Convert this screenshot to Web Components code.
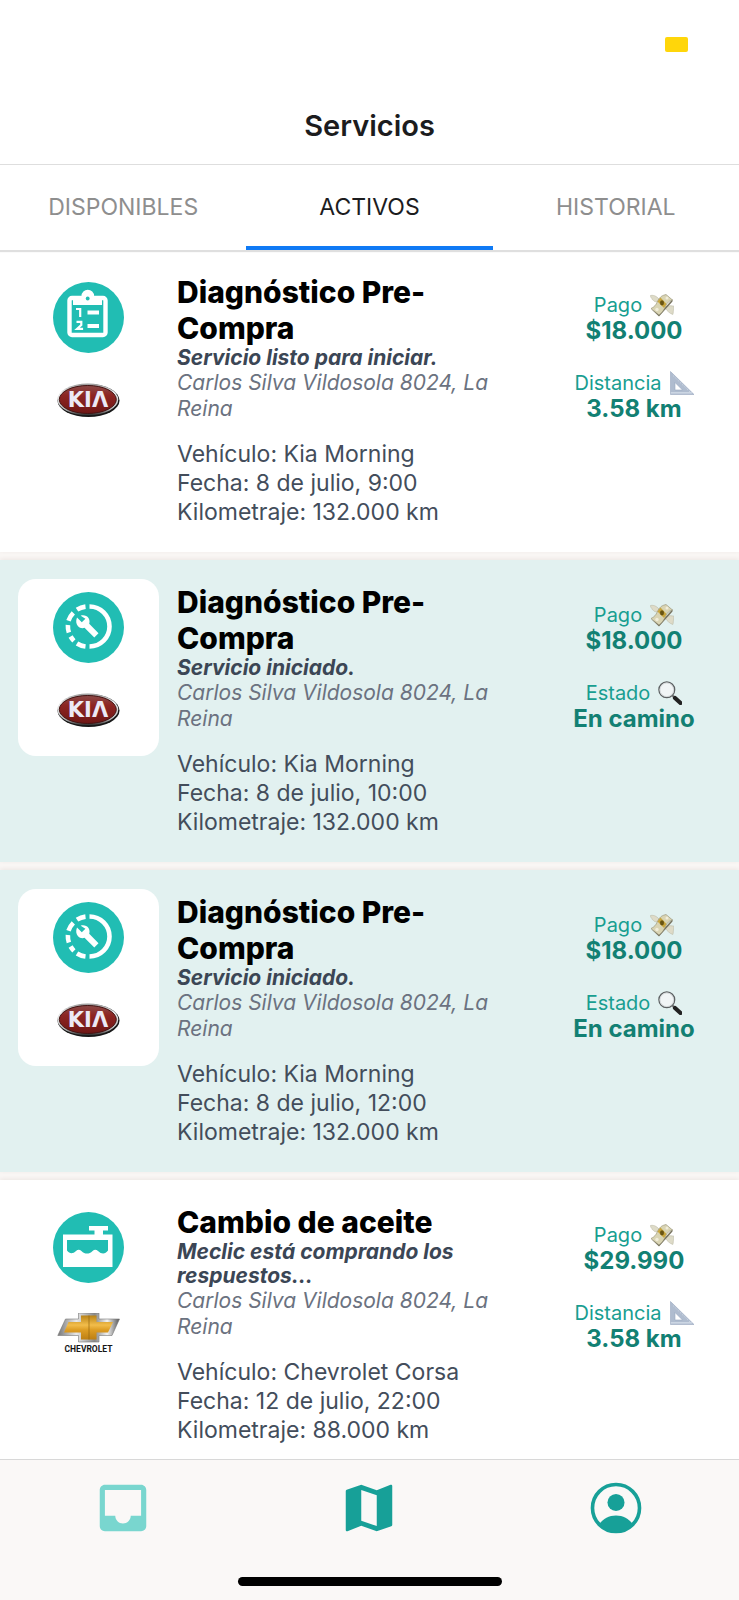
<!DOCTYPE html>
<html lang="es">
<head>
<meta charset="utf-8">
<meta name="viewport" content="width=device-width, initial-scale=1">
<title>Servicios</title>
<style>
  html, body { height: 100%; margin: 0; }
  body { background: #fff; font-family: Inter, "Liberation Sans", sans-serif; color: #000; }
</style>
</head>
<body>
<services-app>
  <screen-header slot="header">Servicios</screen-header>
  <tab-strip slot="header"></tab-strip>

  <service-card icon="checklist" brand="kia" metric="ruler">
    <span slot="title">Diagnóstico Pre-Compra</span>
    <span slot="status">Servicio listo para iniciar.</span>
    <span slot="address">Carlos Silva Vildosola 8024, La Reina</span>
    <span slot="vehicle">Kia Morning</span>
    <span slot="date">8 de julio, 9:00</span>
    <span slot="mileage">132.000 km</span>
    <span slot="price">$18.000</span>
    <span slot="metric-label">Distancia</span>
    <span slot="metric">3.58 km</span>
  </service-card>

  <service-card started icon="progress" brand="kia" metric="lens">
    <span slot="title">Diagnóstico Pre-Compra</span>
    <span slot="status">Servicio iniciado.</span>
    <span slot="address">Carlos Silva Vildosola 8024, La Reina</span>
    <span slot="vehicle">Kia Morning</span>
    <span slot="date">8 de julio, 10:00</span>
    <span slot="mileage">132.000 km</span>
    <span slot="price">$18.000</span>
    <span slot="metric-label">Estado</span>
    <span slot="metric">En camino</span>
  </service-card>

  <service-card started icon="progress" brand="kia" metric="lens">
    <span slot="title">Diagnóstico Pre-Compra</span>
    <span slot="status">Servicio iniciado.</span>
    <span slot="address">Carlos Silva Vildosola 8024, La Reina</span>
    <span slot="vehicle">Kia Morning</span>
    <span slot="date">8 de julio, 12:00</span>
    <span slot="mileage">132.000 km</span>
    <span slot="price">$18.000</span>
    <span slot="metric-label">Estado</span>
    <span slot="metric">En camino</span>
  </service-card>

  <service-card icon="oil" brand="chevrolet" metric="ruler">
    <span slot="title">Cambio de aceite</span>
    <span slot="status">Meclic está comprando los respuestos...</span>
    <span slot="address">Carlos Silva Vildosola 8024, La Reina</span>
    <span slot="vehicle">Chevrolet Corsa</span>
    <span slot="date">12 de julio, 22:00</span>
    <span slot="mileage">88.000 km</span>
    <span slot="price">$29.990</span>
    <span slot="metric-label">Distancia</span>
    <span slot="metric">3.58 km</span>
  </service-card>

  <bottom-bar slot="footer"></bottom-bar>
</services-app>

<script>
const ART = {
  checklist: `<svg viewBox="0 0 71 71" role="img" aria-label="Diagnóstico">
    <circle cx="35.500" cy="35.500" r="35.500" fill="#21bdb3"/>
    <rect x="16.500" y="16" width="36" height="37" rx="2.500" fill="none" stroke="#fff" stroke-width="4.400"/>
    <path fill="#fff" d="M20 14h8.500a6.300 6.300 0 0 1 12.600 0H49v9H20z"/>
    <circle cx="34.700" cy="16.500" r="1.900" fill="#21bdb3"/>
    <path d="M23 27h4.200v8M23.500 39.800h4.800v3.200l-4.200 3.800h6" fill="none" stroke="#fff" stroke-width="2.200"/>
    <path d="M34.500 30.500h11.500M34.500 44h11.500" stroke="#fff" stroke-width="4.200"/>
  </svg>`,
  progress: `<svg viewBox="0 0 71 71" role="img" aria-label="Servicio iniciado">
    <circle cx="35.500" cy="35.500" r="35.500" fill="#21bdb3"/>
    <g fill="none" stroke="#fff" stroke-width="4.600">
      <path d="M36.500 14.500a20 20 0 0 1 0 40"/>
      <path d="M32.500 14.600a20 20 0 0 0-8.500 3M20.300 20.800a20 20 0 0 0-4.800 8M14.900 33a20 20 0 0 0 1 7.500M17.600 44.500a20 20 0 0 0 3.300 4.300M24 51.500a20 20 0 0 0 8.500 3"/>
    </g>
    <path fill="#fff" d="M24 25.500l4.800 4.800 3.600-3.600-4.700-3c3-.9 6.300.1 7.800 2.300 1.200 1.900 1.300 3.900.7 5.700l9.300 9.600-4.200 4.200-9.800-9.700c-2.400.8-4.900.2-6.500-1.600-2-2.200-2.300-5.500-1-8.700z"/>
  </svg>`,
  oil: `<svg viewBox="0 0 71 71" role="img" aria-label="Cambio de aceite">
    <circle cx="35.500" cy="35.500" r="35.500" fill="#21bdb3"/>
    <path fill="#fff" d="M10 22.500h31.500v-4H36V14h19v4.500h-5v4h9.500V55H10z"/>
    <path fill="#21bdb3" d="M14 28h41v10.500c-3 4-6.500 3.700-10 .4-1.800-1.600-3.600-1.600-5.400 0-3.700 3.500-7.500 3.500-11.200 0-1.800-1.600-3.600-1.600-5.400 0-3.200 3-6.200 3.100-9-.4z"/>
  </svg>`,
  kia: `<svg viewBox="1 0 64 50" role="img" aria-label="Kia">
    <defs>
      <linearGradient id="rim" x2="0" y2="1"><stop offset="0" stop-color="#999"/><stop offset=".3" stop-color="#eee"/><stop offset=".8" stop-color="#bbb"/><stop offset="1" stop-color="#222"/></linearGradient>
      <linearGradient id="red" x2="0" y2="1"><stop offset="0" stop-color="#8b4a48"/><stop offset=".35" stop-color="#8d2522"/><stop offset="1" stop-color="#6f1715"/></linearGradient>
    </defs>
    <ellipse cx="32.500" cy="17.500" rx="31" ry="16.500" fill="#161616"/>
    <ellipse cx="31.800" cy="16.500" rx="30.500" ry="16" fill="url(#rim)"/>
    <ellipse cx="31.800" cy="16.500" rx="28.500" ry="14" fill="url(#red)" stroke="#421413"/>
    <text x="32" y="24" text-anchor="middle" font-family="DejaVu Sans" font-weight="700" font-size="21" fill="#eceaf5">KIΛ</text>
  </svg>`,
  chevrolet: `<svg viewBox="0 0 64 50" role="img" aria-label="Chevrolet">
    <defs>
      <linearGradient id="gold" x2="0" y2="1"><stop offset="0" stop-color="#b98317"/><stop offset=".4" stop-color="#f2bd4b"/><stop offset=".6" stop-color="#dd9d24"/><stop offset="1" stop-color="#bd7f13"/></linearGradient>
      <linearGradient id="chrome"><stop offset="0" stop-color="#777"/><stop offset=".3" stop-color="#e8e8e8"/><stop offset=".6" stop-color="#8a8a8a"/><stop offset=".8" stop-color="#f3f3f3"/><stop offset="1" stop-color="#555"/></linearGradient>
    </defs>
    <path fill="url(#chrome)" stroke="#777" stroke-width=".6" d="M21.500 0h20.500v6h20.500L55 22.500H42v6.500H21.500v-6.500H.800L8.500 6h13z"/>
    <path fill="url(#gold)" d="M24 2.500h15.500v6.500H56l-5 10.500H39.500v7H24v-7H7l4.500-10.500H24z"/>
    <path stroke="#94640e" stroke-width=".7" d="M32 2.500v24"/>
    <text x="31.500" y="39" text-anchor="middle" font-family="Roboto" font-weight="700" font-size="8.500" fill="#161616">CHEVROLET</text>
  </svg>`,
  money: `<svg viewBox="0 0 24 24" role="img" aria-label="dinero con alas">
    <path fill="#dedbc8" stroke="#b5b29d" stroke-width=".5" d="M9 6C6 2.500 3 2 .5 2.500c0 2 1 2.500 1.300 3 .2 1.200 1.200 1.600 1.700 2 .5 1.200 3 1.500 5 1.200zM16 13.500c4-1.500 6.500-.5 8-.3-.1 1.500-.6 2-.5 2.800.2 1.200-.3 1.800-.2 2.800.1 1.200-.3 2-.5 2.700-3-1-5.500-3.500-7.500-6z"/>
    <path fill="#77735f" d="M1 16l8 7.500L22.500 8.500V6.200L9 21z"/>
    <path fill="#d9d4b3" stroke="#918c70" stroke-width=".6" d="M1 15.500c5-2.500 5-4.500 7-8 2.500-4.500 4.500-5 8-6l6.500 5.500c-5 1.500-6 4-7.500 7.500-2 4-3.500 5.500-6 7.500z"/>
    <path fill="#c9a63c" d="M7.500 8.500l3-4 6 6.500-2.500 4z"/>
    <ellipse cx="12" cy="9.800" rx="2" ry="2.600" fill="#695413"/>
    <circle cx="17" cy="5" r="1.500" fill="#f1edda"/><circle cx="7" cy="16.500" r="1.700" fill="#f1edda"/>
  </svg>`,
  ruler: `<svg viewBox="0 0 24 24" role="img" aria-label="escuadra">
    <path fill="#afbccf" fill-rule="evenodd" stroke="#98a8bf" stroke-width=".6" d="M.500.500L24 23.500H.500zM5 11.500V19h7.500z"/>
    <path d="M.800 21.800h21" stroke="#ccd6e3" stroke-width="1.600"/>
    <path d="M3 4.500L21 22" stroke="#d5dde8" stroke-dasharray="1 1.500"/>
  </svg>`,
  lens: `<svg viewBox="0 0 24 24" role="img" aria-label="lupa">
    <path d="M14.500 14.500l3 3" stroke="#777" stroke-width="2.200"/>
    <path d="M17 17l5.500 5" stroke="#222" stroke-width="4.200" stroke-linecap="round"/>
    <circle cx="8.800" cy="8.800" r="7.900" fill="#f1f5f6" stroke="#5c6062" stroke-width="1.300"/>
    <circle cx="8.800" cy="8.800" r="6.800" fill="none" stroke="#c8cdcf" stroke-width=".7"/>
  </svg>`,
  inbox: `<svg viewBox="0 0 24 24"><path fill="currentColor" d="M19 3H5c-1.100 0-2 .9-2 2v14c0 1.100.9 2 2 2h14c1.100 0 2-.9 2-2V5c0-1.100-.9-2-2-2zm0 12h-4c0 1.660-1.350 3-3 3s-3-1.340-3-3H5V5h14v10z"/></svg>`,
  map: `<svg viewBox="0 0 24 24"><path fill="currentColor" d="M20.500 3l-.16.030L15 5.100 9 3 3.360 4.900c-.21.070-.36.250-.36.480V20.500c0 .28.220.5.500.5l.16-.030L9 18.900l6 2.100 5.640-1.900c.21-.070.36-.25.36-.48V3.500c0-.28-.22-.5-.5-.5zM15 19l-6-2.110V5l6 2.110V19z"/></svg>`,
  account: `<svg viewBox="0 0 24 24"><circle cx="12" cy="12" r="9.100" fill="none" stroke="currentColor" stroke-width="1.400"/><circle cx="12" cy="9.900" r="3.300" fill="currentColor"/><path fill="currentColor" d="M5.600 18.200C7 16.100 9.300 14.900 12 14.900s5 1.200 6.400 3.300C16.800 20 14.500 21.200 12 21.200S7.200 20 5.600 18.200z"/></svg>`
};

class ShadowElement extends HTMLElement {
  constructor() {
    super();
    this.attachShadow({ mode: "open" });
  }
  connectedCallback() {
    const template = document.createElement("template");
    template.innerHTML = this.view();
    this.shadowRoot.replaceChildren(template.content.cloneNode(true));
  }
}

class ServicesApp extends ShadowElement {
  view() {
    return `<style>
      :host { display: flex; flex-direction: column; height: 100vh; overflow: hidden; }
      header, footer { flex: none; }
      main { flex: 1; min-height: 0; overflow: hidden; display: flex; flex-direction: column; gap: 8px; background: #faf7f5; }
    </style>
    <header><slot name="header"></slot></header>
    <main><slot></slot></main>
    <footer><slot name="footer"></slot></footer>`;
  }
}

class ScreenHeader extends ShadowElement {
  view() {
    return `<style>
      :host { display: block; border-bottom: 1px solid #dedede; }
      .status { display: flex; justify-content: flex-end; padding: 37px 51px 0; height: 51px; }
      .battery { width: 23px; height: 15px; border-radius: 2px; background: #ffd60a; }
      h1 { margin: 0; height: 76px; line-height: 76px; text-align: center; font-size: 29px; font-weight: 600; color: #1c1c1e; }
    </style>
    <div class="status"><span class="battery"></span></div>
    <h1><slot></slot></h1>`;
  }
}

class TabStrip extends ShadowElement {
  view() {
    return `<style>
      :host { display: block; box-shadow: 0 1px 1px 1px #dfdfdf; position: relative; }
      nav { display: grid; grid-template-columns: repeat(3, 1fr); }
      button { appearance: none; border: 0; border-bottom: 4px solid transparent; background: #fff; height: 85px; padding: 2px 0 0; font: 400 23px Inter, sans-serif; color: #8e8e8e; }
      button[aria-selected=true] { color: #1c1c1e; border-color: #0f7af5; }
    </style>
    <nav role="tablist">
      <button role="tab" aria-selected="false">DISPONIBLES</button>
      <button role="tab" aria-selected="true">ACTIVOS</button>
      <button role="tab" aria-selected="false">HISTORIAL</button>
    </nav>`;
  }
}

class ServiceCard extends ShadowElement {
  view() {
    return `<style>
      :host { flex: none; display: grid; grid-template-columns: 141px 1fr 174px; gap: 18px; align-items: start; padding: 19px 18px 25px; background: #fff; box-shadow: 0 -1px 5px rgba(60, 20, 0, .08); }
      :host([started]) { background: #e2f1f0; }
      .media { display: flex; flex-direction: column; align-items: center; gap: 30px; padding: 13px 0; border-radius: 18px; background: #fff; }
      .media svg { display: block; width: 71px; height: 71px; }
      .media .brand svg { width: 64px; height: 50px; }
      .info { padding-top: 5px; }
      h2, p, dl, dd { margin: 0; }
      h2 { font-size: 30px; line-height: 36px; font-weight: 800; }
      .state { font-size: 21px; line-height: 24px; font-weight: 700; font-style: italic; color: #3b4655; }
      .address { font-size: 21px; line-height: 26px; font-style: italic; color: #6b7280; }
      .details { padding-top: 18px; font-size: 23px; line-height: 29px; color: #434d5b; }
      aside { display: grid; gap: 26px; padding-top: 23px; text-align: center; }
      dt { display: flex; justify-content: center; align-items: center; gap: 8px; font-size: 20px; line-height: 26px; color: #189e91; }
      dt svg { display: block; width: 24px; height: 24px; }
      dd { font-size: 24px; line-height: 26px; font-weight: 700; color: #128073; }
    </style>
    <div class="media"><div>${ART[this.getAttribute("icon")]}</div><div class="brand">${ART[this.getAttribute("brand")]}</div></div>
    <div class="info">
      <h2><slot name="title"></slot></h2>
      <p class="state"><slot name="status"></slot></p>
      <p class="address"><slot name="address"></slot></p>
      <div class="details">
        <p>Vehículo: <slot name="vehicle"></slot></p>
        <p>Fecha: <slot name="date"></slot></p>
        <p>Kilometraje: <slot name="mileage"></slot></p>
      </div>
    </div>
    <aside>
      <dl><dt>Pago ${ART.money}</dt><dd><slot name="price"></slot></dd></dl>
      <dl><dt><slot name="metric-label"></slot>${ART[this.getAttribute("metric")]}</dt><dd><slot name="metric"></slot></dd></dl>
    </aside>`;
  }
}

class BottomBar extends ShadowElement {
  view() {
    return `<style>
      :host { display: block; position: relative; border-top: 1px solid #d8d8d8; background: #faf8f7; padding: 17px 0 14px; }
      nav { display: grid; grid-template-columns: repeat(3, 1fr); justify-items: center; }
      a { display: block; color: #17a098; }
      a[aria-current] { color: #79d6cf; }
      svg { display: block; width: 62px; height: 62px; }
      .home { width: 264px; height: 9px; margin: 38px auto 0; border-radius: 5px; background: #000; }
    </style>
    <nav>
      <a href="#servicios" aria-label="Servicios" aria-current="page">${ART.inbox}</a>
      <a href="#mapa" aria-label="Mapa">${ART.map}</a>
      <a href="#perfil" aria-label="Perfil">${ART.account}</a>
    </nav>
    <div class="home"></div>`;
  }
}

customElements.define("services-app", ServicesApp);
customElements.define("screen-header", ScreenHeader);
customElements.define("tab-strip", TabStrip);
customElements.define("service-card", ServiceCard);
customElements.define("bottom-bar", BottomBar);
</script>
</body>
</html>
